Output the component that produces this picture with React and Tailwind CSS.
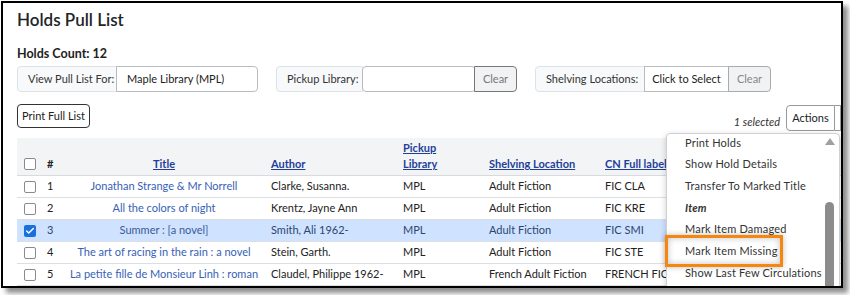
import { Check } from 'lucide-react'

const rows = [
  { n: 1, title: 'Jonathan Strange & Mr Norrell', author: 'Clarke, Susanna.', lib: 'MPL', shelf: 'Adult Fiction', cn: 'FIC CLA' },
  { n: 2, title: 'All the colors of night', author: 'Krentz, Jayne Ann', lib: 'MPL', shelf: 'Adult Fiction', cn: 'FIC KRE' },
  { n: 3, title: 'Summer : [a novel]', author: 'Smith, Ali 1962-', lib: 'MPL', shelf: 'Adult Fiction', cn: 'FIC SMI', selected: true },
  { n: 4, title: 'The art of racing in the rain : a novel', author: 'Stein, Garth.', lib: 'MPL', shelf: 'Adult Fiction', cn: 'FIC STE' },
  { n: 5, title: 'La petite fille de Monsieur Linh : roman', author: 'Claudel, Philippe 1962-', lib: 'MPL', shelf: 'French Adult Fiction', cn: 'FRENCH FIC CLA' },
]

const cols = 'grid grid-cols-[24px_20px_206px_132px_86px_116px_1fr]'

function Box({ checked }) {
  if (checked) {
    return (
      <span className="w-[12px] h-[12px] rounded-[2px] bg-[#1a6fe0] flex items-center justify-center">
        <Check size={10} strokeWidth={3.5} color="white" />
      </span>
    )
  }
  return <span className="w-[12px] h-[12px] rounded-[2px] border border-[#8a8a8a] bg-white" />
}

export default function App() {
  return (
    <div className="w-[850px] h-[295px] bg-white relative" style={{ fontFamily: 'Lato, "Noto Sans", sans-serif' }}>
      <div className="absolute left-[1px] top-[1px] w-[842px] h-[287px] border-2 border-black bg-white overflow-hidden shadow-[5px_5px_5px_rgba(0,0,0,0.45)] text-[#222]">
        <div className="pl-[14px] pt-[5px]">
          <h1 className="text-[17px] leading-[24px] font-semibold text-[#212529]">Holds Pull List</h1>
          <div className="mt-[14px] text-[12.5px] leading-[16px] font-bold">Holds Count: 12</div>

          {/* filters */}
          <div className="mt-[4px] flex gap-[18px] text-[11px] h-[26px] whitespace-nowrap">
            <div className="flex">
              <div className="w-[100px] flex items-center pl-[10px] bg-[#f8f9fa] border border-[#dee2e6] rounded-l-[4px] text-[#333]">View Pull List For:</div>
              <div className="w-[142px] flex items-center pl-[10px] border border-[#b8bcc0] rounded-r-[4px] -ml-px text-[#222]">Maple Library (MPL)</div>
            </div>
            <div className="flex">
              <div className="w-[87px] flex items-center pl-[10px] bg-[#f8f9fa] border border-[#dee2e6] rounded-l-[4px] text-[#333]">Pickup Library:</div>
              <div className="w-[114px] border border-[#b8bcc0] rounded-[4px] -ml-px bg-white" />
              <div className="w-[43px] flex items-center justify-center bg-[#f1f2f3] border border-[#777] rounded-r-[4px] -ml-[2px] text-[#777]">Clear</div>
            </div>
            <div className="flex">
              <div className="w-[110px] flex items-center pl-[10px] bg-[#f8f9fa] border border-[#dee2e6] rounded-l-[4px] text-[#333]">Shelving Locations:</div>
              <div className="w-[85px] flex items-center justify-center border border-[#b8bcc0] -ml-px text-[#222]">Click to Select</div>
              <div className="w-[43px] flex items-center justify-center bg-[#f1f2f3] border border-[#aaa] rounded-r-[4px] -ml-px text-[#888]">Clear</div>
            </div>
          </div>

          {/* toolbar */}
          <div className="mt-[12px] flex items-start h-[27px]">
            <div className="w-[73px] h-[24px] flex items-center justify-center border border-[#333] rounded-[4px] text-[11px] text-[#222]">Print Full List</div>
            <div className="ml-auto flex items-end h-[27px]">
              <span className="italic text-[11px] mr-[6px] mb-[1px] text-[#333]">1 selected</span>
              <div className="w-[49px] h-[26px] flex items-center justify-center border border-[#999] rounded-l-[4px] text-[11px]">Actions</div>
              <div className="w-[6px] h-[26px] border-y border-r border-[#999]" />
            </div>
          </div>

          {/* table */}
          <div className="mt-[7px] text-[11px]">
            <div className={`${cols} h-[38px] bg-[#f3f4f6] border-b border-[#d8dadd] items-end pb-[3px] font-bold text-[11px] leading-[16px]`}>
              <div className="flex pl-[7px] pb-[2px]"><Box /></div>
              <div className="pl-[6px] text-[#222]">#</div>
              <div className="text-center text-[#1f3f99] underline">Title</div>
              <div className="pl-[4px] text-[#1f3f99] underline">Author</div>
              <div className="pl-[4px] text-[#1f3f99] underline">Pickup<br />Library</div>
              <div className="pl-[4px] text-[#1f3f99] underline">Shelving Location</div>
              <div className="pl-[4px] text-[#1f3f99] underline whitespace-nowrap">CN Full label</div>
            </div>
            {rows.map(r => (
              <div key={r.n} className={`${cols} h-[22px] items-center border-b border-[#dcdfe2] whitespace-nowrap ${r.selected ? 'bg-[#cfe2ff] text-[#2b466f]' : 'text-[#222]'}`}>
                <div className="flex pl-[7px]"><Box checked={r.selected} /></div>
                <div className="pl-[6px]">{r.n}</div>
                <div className={`text-center ${r.selected ? 'text-[#3a5a9a]' : 'text-[#3761b6]'}`}>{r.title}</div>
                <div className="pl-[4px]">{r.author}</div>
                <div className="pl-[4px]">{r.lib}</div>
                <div className="pl-[4px]">{r.shelf}</div>
                <div className="pl-[4px]">{r.cn}</div>
              </div>
            ))}
          </div>
        </div>

        {/* actions dropdown */}
        <div className="absolute left-[663px] top-[130px] w-[174px] h-[170px] bg-white border border-[#d0d0d0] rounded-[4px] shadow-[0_2px_6px_rgba(0,0,0,0.2)] text-[11px] tracking-[0.2px] text-[#333]">
          <div className="flex flex-col pl-[18px] -mt-[2px]">
            <div className="h-[21.7px] flex items-center">Print Holds</div>
            <div className="h-[21.7px] flex items-center">Show Hold Details</div>
            <div className="h-[21.7px] flex items-center">Transfer To Marked Title</div>
            <div className="h-[21.7px] flex items-center font-bold italic">Item</div>
            <div className="h-[21.7px] flex items-center">Mark Item Damaged</div>
            <div className="h-[21.7px] flex items-center">Mark Item Missing</div>
            <div className="h-[21.7px] flex items-center">Show Last Few Circulations</div>
          </div>
          {/* scrollbar */}
          <div className="absolute right-[4px] top-[4px] w-[11px] flex flex-col items-center">
            <svg width="10" height="7" viewBox="0 0 10 7"><path d="M5 0 L10 7 L0 7 Z" fill="#a0a0a0" /></svg>
          </div>
          <div className="absolute right-[5px] top-[68px] w-[9px] h-[110px] rounded-[5px] bg-[#8c8c8c]" />
        </div>

        {/* highlight */}
        <div className="absolute left-[662px] top-[232px] w-[118px] h-[32px] border-[3px] border-[#f7860f] shadow-[inset_0_0_6px_rgba(0,0,0,0.25),0_0_6px_rgba(0,0,0,0.25)]" />
      </div>
    </div>
  )
}
